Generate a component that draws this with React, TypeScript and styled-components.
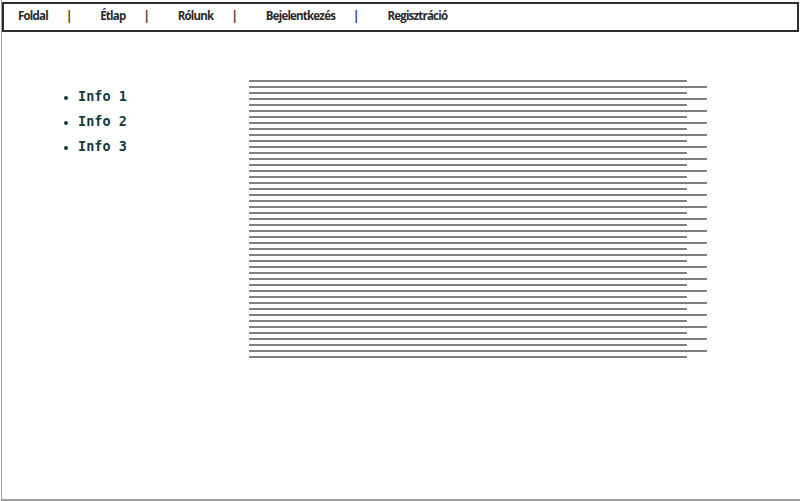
import { createGlobalStyle } from "styled-components";
import styled from "styled-components";

const GlobalStyle = createGlobalStyle`
	html, body {
		margin: 0;
		padding: 0;
		background: #fff;
	}
`;

const Page = styled.div`
	box-sizing: border-box;
	width: 800px;
	height: 501px;
	margin-left: 1px;
	border-left: 1px solid #a0a0a0;
	border-bottom: 2px solid #a0a0a0;
	padding-top: 2px;
	display: flex;
	flex-direction: column;
`;

const NavBar = styled.nav`
	box-sizing: border-box;
	width: 797px;
	height: 30px;
	border: 2px solid #2e2e2e;
	display: flex;
	align-items: center;
	padding-left: 14px;
	padding-bottom: 3px;
`;

const NavItem = styled.a<{ $gap: number }>`
	font-family: "Open Sans", sans-serif;
	font-weight: 700;
	font-size: 11.5px;
	letter-spacing: -0.8px;
	color: #2a2a2a;
	text-decoration: none;
	margin-right: ${(p) => p.$gap}px;
`;

const Sep = styled.span<{ $gap: number }>`
	font-family: "Open Sans", sans-serif;
	font-weight: 700;
	font-size: 11.5px;
	color: #2a2a2a;
	margin-right: ${(p) => p.$gap}px;
`;

const Content = styled.div`
	display: flex;
	padding-top: 48px;
`;

const Sidebar = styled.aside`
	width: 247px;
`;

const InfoList = styled.ul`
	margin: 4px 0 0;
	padding-left: 76px;
	list-style: disc;
	font-family: "DejaVu Sans Mono", monospace;
	font-weight: 700;
	font-size: 13.5px;
	line-height: 25px;
	color: #16393a;

	li::marker {
		font-size: 12px;
	}
`;

const Lines = styled.div`
	display: flex;
	flex-direction: column;
	gap: 4px;
`;

const Line = styled.div<{ $long: boolean }>`
	height: 2px;
	width: ${(p) => (p.$long ? 458 : 438)}px;
	background: #808080;
`;

const navItems = ["Foldal", "Étlap", "Rólunk", "Bejelentkezés", "Regisztráció"];

export default function App() {
	return (
		<>
			<GlobalStyle />
			<Page>
				<NavBar>
					{navItems.map((label, i) => {
						const last = i === navItems.length - 1;
						return (
							<span key={label} style={{ display: "contents" }}>
								<NavItem href="#" $gap={last ? 0 : 18}>
									{label}
								</NavItem>
								{!last && <Sep $gap={28}>|</Sep>}
							</span>
						);
					})}
				</NavBar>
				<Content>
					<Sidebar>
						<InfoList>
							<li>Info 1</li>
							<li>Info 2</li>
							<li>Info 3</li>
						</InfoList>
					</Sidebar>
					<Lines>
						{Array.from({ length: 47 }, (_, i) => (
							<Line key={i} $long={i % 2 === 1} />
						))}
					</Lines>
				</Content>
			</Page>
		</>
	);
}
